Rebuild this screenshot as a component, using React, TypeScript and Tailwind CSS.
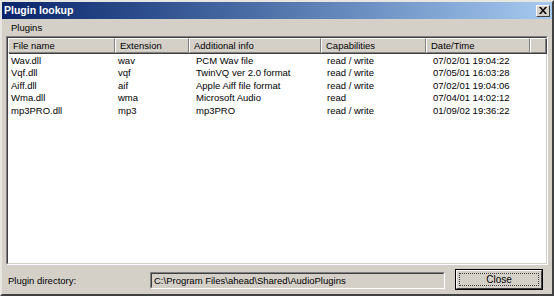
import React from 'react'

const plugins = [
  { file: 'Wav.dll', ext: 'wav', info: 'PCM Wav file', caps: 'read / write', date: '07/02/01 19:04:22' },
  { file: 'Vqf.dll', ext: 'vqf', info: 'TwinVQ ver 2.0 format', caps: 'read / write', date: '07/05/01 16:03:28' },
  { file: 'Aiff.dll', ext: 'aif', info: 'Apple Aiff file format', caps: 'read / write', date: '07/02/01 19:04:06' },
  { file: 'Wma.dll', ext: 'wma', info: 'Microsoft Audio', caps: 'read', date: '07/04/01 14:02:12' },
  { file: 'mp3PRO.dll', ext: 'mp3', info: 'mp3PRO', caps: 'read / write', date: '01/09/02 19:36:22' },
]

const headers = ['File name', 'Extension', 'Additional info', 'Capabilities', 'Date/Time', '']
const cols = 'grid grid-cols-[107px_74px_132px_105px_104px_1fr]'

const App = () => {
  return (
    <div
      className="w-[554px] h-[296px] bg-[#d4d0c8] border-2 border-t-[#e8e6e0] border-l-[#e8e6e0] border-r-[#404040] border-b-[#404040] flex flex-col text-black text-[9.5px]"
      style={{ fontFamily: '"Liberation Sans", Arial, sans-serif' }}
    >
      {/* Title bar */}
      <div className="h-[17px] flex items-center justify-between pl-[2px] pr-[2px] bg-gradient-to-r from-[#0a246a] to-[#a6caf0]">
        <span className="text-white font-bold text-[10.5px] leading-none">Plugin lookup</span>
        <div className="w-[14px] h-[12px] bg-[#d4d0c8] border border-t-white border-l-white border-r-[#404040] border-b-[#404040] flex items-center justify-center">
          <svg width="8" height="7" viewBox="0 0 8 7">
            <path d="M0 0h2l2 2.5L6 0h2L5 3.5 8 7H6L4 4.5 2 7H0l3-3.5z" fill="#000" />
          </svg>
        </div>
      </div>

      {/* Group label */}
      <div className="h-[17px] flex items-center pl-[9px] leading-none">Plugins</div>

      {/* List view */}
      <div className="mx-[4px] h-[229px] bg-white border border-t-[#808080] border-l-[#808080] border-r-white border-b-white">
        <div className="h-full border border-t-[#404040] border-l-[#404040] border-r-[#d4d0c8] border-b-[#d4d0c8] flex flex-col">
          <div className={`${cols} h-[15px] bg-[#d4d0c8]`}>
            {headers.map((h, i) => (
              <div
                key={i}
                className="border border-t-white border-l-white border-r-[#808080] border-b-[#808080] shadow-[1px_1px_0_#404040] flex items-center pl-[4px] leading-none whitespace-nowrap overflow-hidden"
              >
                {h}
              </div>
            ))}
          </div>
          <div className="pt-[1px]">
            {plugins.map((p) => (
              <div key={p.file} className={`${cols} h-[12.5px] items-center leading-none`}>
                <span className="pl-[3px] whitespace-nowrap">{p.file}</span>
                <span className="pl-[3px] whitespace-nowrap">{p.ext}</span>
                <span className="pl-[7px] whitespace-nowrap">{p.info}</span>
                <span className="pl-[6px] whitespace-nowrap">{p.caps}</span>
                <span className="pl-[7px] whitespace-nowrap">{p.date}</span>
                <span />
              </div>
            ))}
          </div>
        </div>
      </div>

      {/* Bottom row */}
      <div className="flex-1 flex items-center pl-[6px] pr-[9px]">
        <span className="w-[142px] leading-none pt-[2px]">Plugin directory:</span>
        <div className="w-[295px] h-[17px] mt-[2px] border border-t-[#808080] border-l-[#808080] border-r-white border-b-white">
          <div className="h-full border border-t-[#404040] border-l-[#404040] border-r-[#d4d0c8] border-b-[#d4d0c8] flex items-center pl-[2px] leading-none whitespace-nowrap">
            C:\Program Files\ahead\Shared\AudioPlugins
          </div>
        </div>
        <div className="ml-auto w-[88px] h-[21px] border border-black">
          <div className="h-full border border-t-white border-l-white border-r-[#404040] border-b-[#404040] p-[2px]">
            <div className="h-full border border-dotted border-[#404040] flex items-center justify-center text-[10px] leading-none">
              Close
            </div>
          </div>
        </div>
      </div>
    </div>
  )
}

export default App
